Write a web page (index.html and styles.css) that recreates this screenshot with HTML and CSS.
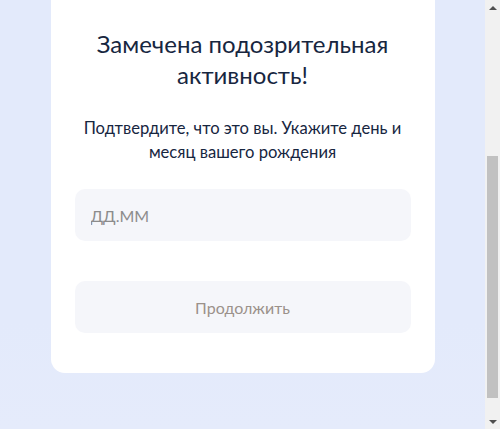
FILE: index.html
```html
<!DOCTYPE html>
<html lang="ru">
<head>
<meta charset="utf-8">
<title>Проверка</title>
<link rel="stylesheet" href="styles.css">
</head>
<body>
<div class="screen">
  <main class="viewport">
    <section class="card">
      <h1 class="title">Замечена подозрительная активность!</h1>
      <p class="subtitle">Подтвердите, что это вы. Укажите день и месяц вашего рождения</p>
      <input class="field" type="text" placeholder="ДД.ММ">
      <button class="btn" type="button">Продолжить</button>
    </section>
  </main>
  <div class="scrollbar" aria-hidden="true">
    <div class="sb-btn"><span class="tri tri-up"></span></div>
    <div class="sb-track"><div class="sb-thumb"></div></div>
    <div class="sb-btn"><span class="tri tri-down"></span></div>
  </div>
</div>
</body>
</html>
```
FILE: styles.css
```css
html, body {
  margin: 0;
  padding: 0;
  height: 100%;
  overflow: hidden;
}
body {
  font-family: Lato, "Noto Sans", sans-serif;
  background: #e3eafb;
}
.screen {
  display: flex;
  height: 100vh;
}
.viewport {
  flex: 1;
  min-width: 0;
  overflow: hidden;
  display: flex;
  flex-direction: column;
  justify-content: flex-end;
  align-items: center;
  padding-bottom: 56px;
  background: linear-gradient(180deg, #e3eafb 0%, #e3eafb 75%, #e5ebfb 100%);
}
.card {
  flex: none;
  width: 384px;
  box-sizing: border-box;
  background: #ffffff;
  border-radius: 14px;
  padding: 300px 24px 40px;
  display: flex;
  flex-direction: column;
}
.title {
  margin: 0 0 26px;
  font-weight: 400;
  font-size: 24px;
  line-height: 31px;
  color: #17263f;
  text-align: center;
}
.subtitle {
  margin: 0 0 25px;
  font-size: 16.6px;
  line-height: 24px;
  color: #17263f;
  text-align: center;
}
.field {
  display: block;
  height: 52px;
  box-sizing: border-box;
  border: none;
  outline: none;
  border-radius: 10px;
  background: #f5f6fa;
  padding: 0 16px;
  font-family: Lato, "Noto Sans", sans-serif;
  font-size: 16px;
  color: #17263f;
  margin: 0 0 40px;
}
.field::placeholder {
  color: #8c8c8c;
}
.btn {
  height: 52px;
  border: none;
  border-radius: 10px;
  background: #f5f6fa;
  font-family: Lato, "Noto Sans", sans-serif;
  font-size: 16px;
  color: #9b918a;
  cursor: default;
}
.scrollbar {
  flex: none;
  width: 15px;
  background: #f1f1f1;
  display: flex;
  flex-direction: column;
}
.sb-btn {
  height: 15px;
  display: flex;
  align-items: center;
  justify-content: center;
}
.tri {
  width: 0;
  height: 0;
  border-left: 4px solid transparent;
  border-right: 4px solid transparent;
}
.tri-up {
  border-bottom: 4px solid #505050;
}
.tri-down {
  border-top: 4px solid #505050;
}
.sb-track {
  flex: 1;
  padding: 141px 2px 16px;
  display: flex;
  flex-direction: column;
}
.sb-thumb {
  flex: 1;
  background: #c1c1c1;
}
```
